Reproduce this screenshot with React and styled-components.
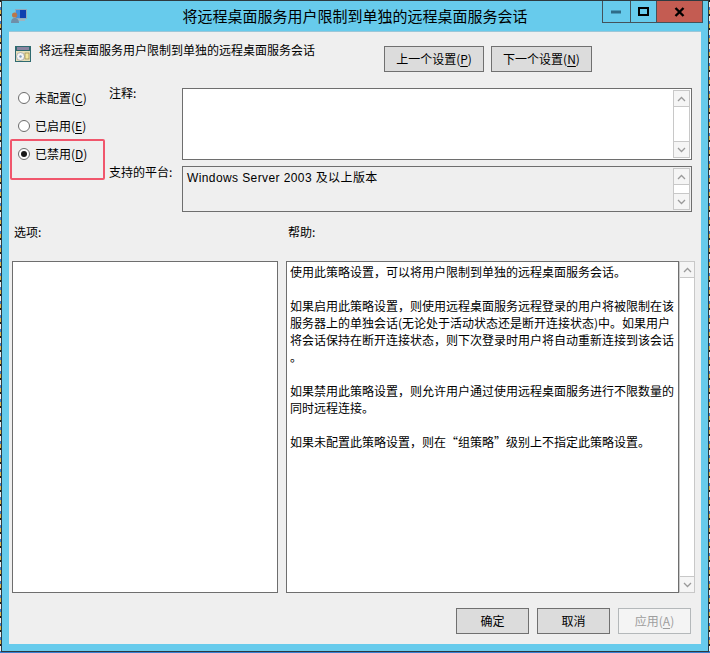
import React from 'react';
import styled, { createGlobalStyle } from "styled-components";

const cjk = `"Noto Sans CJK SC", "Liberation Sans", sans-serif`;

const GlobalStyle = createGlobalStyle`
    html, body {
        margin: 0;
        padding: 0;
        background: #ffffff;
    }
    body {
        font-family: ${cjk};
        font-size: 12px;
        color: #000;
    }
`;

const Desktop = styled.div`
    width: 710px;
    height: 653px;
    overflow: hidden;
    box-sizing: border-box;
    padding: 0 0 0 1px;
    background:
        repeating-linear-gradient(180deg, #1c1c1c 0 2px, #f0f0f0 2px 7px, #3b7fd0 7px 10px, #e3b94c 10px 14px);
`;

const Window = styled.div`
    width: 708px;
    height: 652px;
    box-sizing: border-box;
    border: 1px solid #2e3a40;
    background: #67cbec;
    display: flex;
    flex-direction: column;
`;

const TitleBar = styled.div`
    height: 30px;
    flex: none;
    display: grid;
    grid-template-columns: 1fr auto 1fr;
`;

const TitleIcon = styled.div`
    padding: 8px 0 0 9px;
    line-height: 0;
`;

const TitleText = styled.div`
    font-size: 15px;
    line-height: 30px;
`;

const Controls = styled.div`
    justify-self: end;
    display: flex;
    height: 21px;
    margin-right: 5px;
    border: 1px solid #44525a;
    border-top: none;
`;

const ControlButton = styled.div`
    width: ${p => p.$width}px;
    display: flex;
    align-items: center;
    justify-content: center;
    background: ${p => p.$close ? "#c45c52" : "transparent"};
    border-left: ${p => p.$first ? "none" : "1px solid #44525a"};
`;

const Client = styled.div`
    margin: 0 7px;
    width: 692px;
    height: 613px;
    box-sizing: border-box;
    background: #efefef;
    border-top: 1px solid #9cc7d8;
    display: flex;
    flex-direction: column;
`;

const Header = styled.div`
    display: flex;
    height: 26px;
    margin-top: 14px;
    padding-left: 6px;
`;

const HeaderIcon = styled.div`
    width: 24px;
    line-height: 0;
    flex: none;
`;

const HeaderTitle = styled.div`
    width: 345px;
    flex: none;
    line-height: 17px;
    margin-top: -5px;
`;

const NavButtons = styled.div`
    display: flex;
    gap: 7px;
`;

const Button = styled.div`
    width: ${p => p.$width || 73}px;
    height: ${p => p.$height || 26}px;
    box-sizing: border-box;
    border: 1px solid ${p => p.$disabled ? "#b4b8ba" : "#707070"};
    background: ${p => p.$disabled ? "#f4f4f4" : "#dcdcdc"};
    color: ${p => p.$disabled ? "#9e9e9e" : "#000"};
    display: flex;
    align-items: center;
    justify-content: center;
    line-height: 1;
    u { text-underline-offset: 2px; }
`;

const Settings = styled.div`
    display: grid;
    grid-template-columns: 100px 73px 510px;
    grid-template-rows: 72px 46px;
    row-gap: 6px;
    margin-top: 16px;
`;

const RadioGroup = styled.div`
    grid-row: 1 / span 2;
    position: relative;
    margin-top: -4px;
    padding-left: 9px;
`;

const RadioRow = styled.div`
    height: 28px;
    display: flex;
    align-items: center;
    gap: 5px;
    span:last-of-type { margin-top: -2px; }
    u { text-underline-offset: 2px; }
`;

const RadioDot = styled.span`
    width: 12px;
    height: 12px;
    box-sizing: border-box;
    border-radius: 50%;
    border: 1px solid #6c6c6c;
    background: #fff;
    display: flex;
    align-items: center;
    justify-content: center;
    flex: none;
    &::after {
        content: "";
        width: 6px;
        height: 6px;
        border-radius: 50%;
        background: ${p => p.$checked ? "#1a1a1a" : "transparent"};
    }
`;

const Highlight = styled.div`
    position: absolute;
    left: 1px;
    top: 55px;
    width: 95px;
    height: 41px;
    box-sizing: border-box;
    border: 2px solid #f0566c;
    border-radius: 2px;
`;

const FieldLabel = styled.div`
    line-height: 17px;
    margin-top: ${p => p.$top}px;
`;

const Field = styled.div`
    box-sizing: border-box;
    border: 1px solid #6e6e6e;
    background: ${p => p.$muted ? "#efefef" : "#fff"};
    display: flex;
    justify-content: space-between;
    padding: 1px;
`;

const FieldText = styled.div`
    font-family: "Liberation Sans", ${cjk};
    padding: 2px 0 0 3px;
    line-height: 17px;
    letter-spacing: 0.4px;
`;

const Scrollbar = styled.div`
    width: 17px;
    flex: none;
    box-sizing: border-box;
    border: 1px solid #c8c8c8;
    background: #fff;
    display: flex;
    flex-direction: column;
    justify-content: space-between;
`;

const ScrollArrow = styled.div`
    height: 16px;
    box-sizing: border-box;
    display: flex;
    align-items: center;
    justify-content: center;
    border-${p => p.$down ? "top" : "bottom"}: 1px solid #c8c8c8;
    background: #f5f5f5;
`;

const Panels = styled.div`
    display: grid;
    grid-template-columns: 266px 409px;
    grid-template-rows: 18px 332px;
    column-gap: 8px;
    row-gap: 19px;
    margin-top: 12px;
    padding-left: 3px;
`;

const PanelLabel = styled.div`
    padding-left: 2px;
    line-height: 16px;
`;

const OptionsBox = styled.div`
    border: 1px solid #6e6e6e;
    background: #fff;
`;

const HelpPanel = styled.div`
    display: flex;
    min-height: 0;
`;

const HelpText = styled.div`
    flex: 1;
    box-sizing: border-box;
    border: 1px solid #6e6e6e;
    background: #fff;
    padding: 1px 0 0 3px;
    line-height: 17px;
    white-space: pre;
    overflow: hidden;
`;

const HelpScrollbar = styled(Scrollbar)`
    width: 16px;
`;

const Footer = styled.div`
    display: flex;
    justify-content: flex-end;
    gap: 8px;
    margin-top: 15px;
    padding-right: 10px;
`;

const Chevron = ({ down }) => (
    <svg width="9" height="6" viewBox="0 0 9 6">
        <polyline points={down ? "1,1 4.5,4.5 8,1" : "1,5 4.5,1.5 8,5"} fill="none" stroke="#9a9a9a" strokeWidth="1.3" />
    </svg>
);

const ScrollBarParts = ({ as: Comp = Scrollbar }) => (
    <Comp>
        <ScrollArrow><Chevron /></ScrollArrow>
        <ScrollArrow $down><Chevron down /></ScrollArrow>
    </Comp>
);

const UserMonitorIcon = () => (
    <svg width="16" height="15" viewBox="0 0 16 15">
        <rect x="4" y="0" width="12" height="10" fill="#8fa9bd" />
        <rect x="5" y="1" width="10" height="8" fill="#0f3fb0" />
        <rect x="5" y="1" width="4" height="8" fill="#3f8fe0" />
        <rect x="7" y="10" width="7" height="2" fill="#9fb4bf" />
        <circle cx="3.6" cy="6" r="2.6" fill="#b9764a" />
        <path d="M0 14 C0 10 2 9 3.6 9 C5.5 9 8 10 8 14 Z" fill="#6f8ea8" />
    </svg>
);

const PolicyIcon = () => (
    <svg width="17" height="17" viewBox="0 0 17 17">
        <rect x="0" y="0" width="16" height="16" fill="#2f6a70" />
        <rect x="2" y="1" width="12" height="3" fill="#8a84a0" />
        <rect x="1" y="5" width="14" height="10" fill="#e6dfb8" />
        <circle cx="5.5" cy="10.5" r="4" fill="#f4f4f4" stroke="#9a9a9a" strokeWidth="0.7" />
        <circle cx="5.5" cy="10.5" r="1.2" fill="#7f9fc0" />
        <rect x="10" y="7" width="4" height="6" fill="#f3e6a0" stroke="#8a7a40" strokeWidth="0.6" />
    </svg>
);

const App = () => {
    const help = `使用此策略设置，可以将用户限制到单独的远程桌面服务会话。

如果启用此策略设置，则使用远程桌面服务远程登录的用户将被限制在该
服务器上的单独会话(无论处于活动状态还是断开连接状态)中。如果用户
将会话保持在断开连接状态，则下次登录时用户将自动重新连接到该会话
。

如果禁用此策略设置，则允许用户通过使用远程桌面服务进行不限数量的
同时远程连接。

如果未配置此策略设置，则在“组策略”级别上不指定此策略设置。`;

    return (
        <Desktop>
            <GlobalStyle />
            <Window>
                <TitleBar>
                    <TitleIcon><UserMonitorIcon /></TitleIcon>
                    <TitleText>将远程桌面服务用户限制到单独的远程桌面服务会话</TitleText>
                    <Controls>
                        <ControlButton $width={27} $first>
                            <svg width="11" height="4" viewBox="0 0 11 4"><rect width="10" height="3" y="0.5" fill="#2f6c88" /></svg>
                        </ControlButton>
                        <ControlButton $width={25}>
                            <svg width="11" height="9" viewBox="0 0 11 9"><rect x="1" y="1" width="9" height="7" fill="none" stroke="#000" strokeWidth="2" /></svg>
                        </ControlButton>
                        <ControlButton $width={45} $close>
                            <svg width="11" height="10" viewBox="0 0 11 10"><path d="M1.5 1 L9.5 9 M9.5 1 L1.5 9" stroke="#000" strokeWidth="2.4" /></svg>
                        </ControlButton>
                    </Controls>
                </TitleBar>
                <Client>
                    <Header>
                        <HeaderIcon><PolicyIcon /></HeaderIcon>
                        <HeaderTitle>将远程桌面服务用户限制到单独的远程桌面服务会话</HeaderTitle>
                        <NavButtons>
                            <Button $width={100}><span>上一个设置(<u>P</u>)</span></Button>
                            <Button $width={101}><span>下一个设置(<u>N</u>)</span></Button>
                        </NavButtons>
                    </Header>
                    <Settings>
                        <RadioGroup>
                            <RadioRow><RadioDot /><span>未配置(<u>C</u>)</span></RadioRow>
                            <RadioRow><RadioDot /><span>已启用(<u>E</u>)</span></RadioRow>
                            <RadioRow><RadioDot $checked /><span>已禁用(<u>D</u>)</span></RadioRow>
                            <Highlight />
                        </RadioGroup>
                        <FieldLabel $top={-4}>注释:</FieldLabel>
                        <Field><div /><ScrollBarParts /></Field>
                        <FieldLabel $top={-3}>支持的平台:</FieldLabel>
                        <Field $muted>
                            <FieldText>Windows Server 2003 及以上版本</FieldText>
                            <ScrollBarParts />
                        </Field>
                    </Settings>
                    <Panels>
                        <PanelLabel>选项:</PanelLabel>
                        <PanelLabel>帮助:</PanelLabel>
                        <OptionsBox />
                        <HelpPanel>
                            <HelpText>{help}</HelpText>
                            <ScrollBarParts as={HelpScrollbar} />
                        </HelpPanel>
                    </Panels>
                    <Footer>
                        <Button>确定</Button>
                        <Button>取消</Button>
                        <Button $disabled><span>应用(<u>A</u>)</span></Button>
                    </Footer>
                </Client>
            </Window>
        </Desktop>
    );
};

export default App;
